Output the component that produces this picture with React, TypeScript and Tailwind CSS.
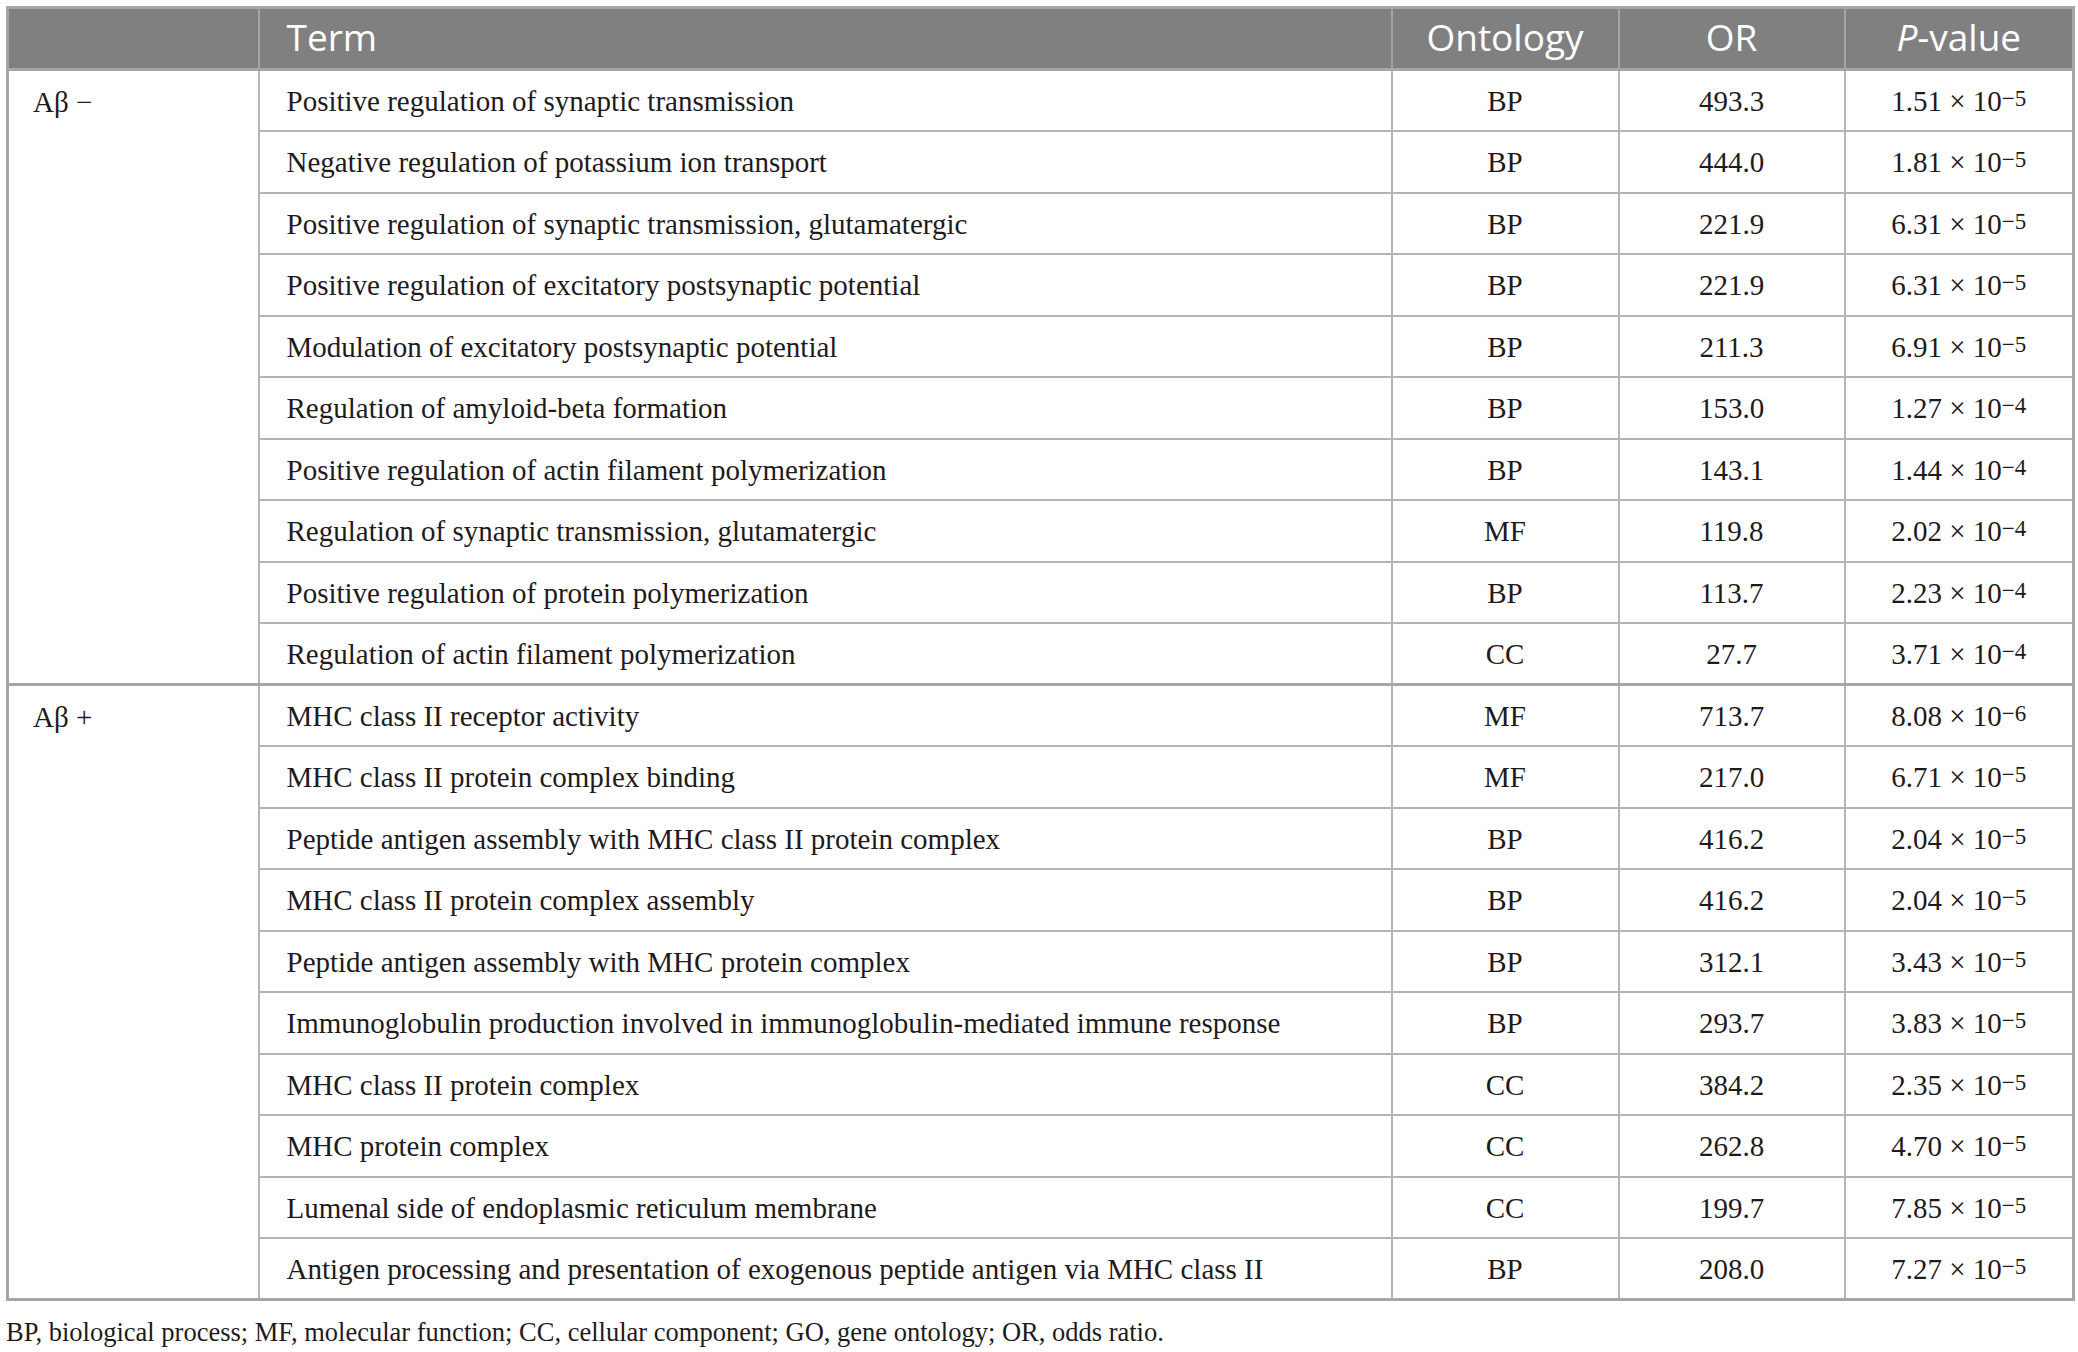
import React from "react";

type Row = { term: string; ont: string; or: string; p: string; exp: string };

const minus: Row[] = [
  { term: "Positive regulation of synaptic transmission", ont: "BP", or: "493.3", p: "1.51", exp: "5" },
  { term: "Negative regulation of potassium ion transport", ont: "BP", or: "444.0", p: "1.81", exp: "5" },
  { term: "Positive regulation of synaptic transmission, glutamatergic", ont: "BP", or: "221.9", p: "6.31", exp: "5" },
  { term: "Positive regulation of excitatory postsynaptic potential", ont: "BP", or: "221.9", p: "6.31", exp: "5" },
  { term: "Modulation of excitatory postsynaptic potential", ont: "BP", or: "211.3", p: "6.91", exp: "5" },
  { term: "Regulation of amyloid-beta formation", ont: "BP", or: "153.0", p: "1.27", exp: "4" },
  { term: "Positive regulation of actin filament polymerization", ont: "BP", or: "143.1", p: "1.44", exp: "4" },
  { term: "Regulation of synaptic transmission, glutamatergic", ont: "MF", or: "119.8", p: "2.02", exp: "4" },
  { term: "Positive regulation of protein polymerization", ont: "BP", or: "113.7", p: "2.23", exp: "4" },
  { term: "Regulation of actin filament polymerization", ont: "CC", or: "27.7", p: "3.71", exp: "4" },
];

const plus: Row[] = [
  { term: "MHC class II receptor activity", ont: "MF", or: "713.7", p: "8.08", exp: "6" },
  { term: "MHC class II protein complex binding", ont: "MF", or: "217.0", p: "6.71", exp: "5" },
  { term: "Peptide antigen assembly with MHC class II protein complex", ont: "BP", or: "416.2", p: "2.04", exp: "5" },
  { term: "MHC class II protein complex assembly", ont: "BP", or: "416.2", p: "2.04", exp: "5" },
  { term: "Peptide antigen assembly with MHC protein complex", ont: "BP", or: "312.1", p: "3.43", exp: "5" },
  { term: "Immunoglobulin production involved in immunoglobulin-mediated immune response", ont: "BP", or: "293.7", p: "3.83", exp: "5" },
  { term: "MHC class II protein complex", ont: "CC", or: "384.2", p: "2.35", exp: "5" },
  { term: "MHC protein complex", ont: "CC", or: "262.8", p: "4.70", exp: "5" },
  { term: "Lumenal side of endoplasmic reticulum membrane", ont: "CC", or: "199.7", p: "7.85", exp: "5" },
  { term: "Antigen processing and presentation of exogenous peptide antigen via MHC class II", ont: "BP", or: "208.0", p: "7.27", exp: "5" },
];

const td = "border-2 border-[#b4b4b4] align-middle leading-none pt-[2px]";

const Group = ({ label, rows }: { label: string; rows: Row[] }) => (
  <tbody className="border-t-[3px] border-[#a6a6a6]">
    {rows.map((r, i) => (
      <tr key={i} className="h-[61.5px]">
        {i === 0 && (
          <td rowSpan={rows.length} className={`${td} !align-top pl-[24px]`}>
            <div className="h-[58px] flex items-center">{label}</div>
          </td>
        )}
        <td className={`${td} pl-[27px]`}>{r.term}</td>
        <td className={`${td} text-center`}>{r.ont}</td>
        <td className={`${td} text-center`}>{r.or}</td>
        <td className={`${td} text-center`}>
          {r.p} × 10
          <sup className="text-[23px] relative -top-[5px]">−{r.exp}</sup>
        </td>
      </tr>
    ))}
  </tbody>
);

export default function App() {
  return (
    <div className="bg-white w-[2078px] h-[1352px] pt-[6px] pl-[6px] font-['Liberation_Serif',serif] text-[#1f1a1b]">
      <table className="border-collapse border-[3px] border-[#a6a6a6] w-[2066px] table-fixed text-[29px]">
        <colgroup>
          <col className="w-[251px]" />
          <col className="w-[1133px]" />
          <col className="w-[227px]" />
          <col className="w-[226px]" />
          <col className="w-[229px]" />
        </colgroup>
        <thead>
          <tr className="h-[62px] bg-[#808080] text-white font-['Open_Sans',sans-serif] text-[37px] leading-none">
            <th className="border-2 border-[#a6a6a6] font-normal pb-[5px]"></th>
            <th className="border-2 border-[#a6a6a6] font-normal pb-[5px] text-left pl-[27px]">Term</th>
            <th className="border-2 border-[#a6a6a6] font-normal pb-[5px]">Ontology</th>
            <th className="border-2 border-[#a6a6a6] font-normal pb-[5px]">OR</th>
            <th className="border-2 border-[#a6a6a6] font-normal pb-[5px]">
              <i>P</i>-value
            </th>
          </tr>
        </thead>
        <Group label="Aβ −" rows={minus} />
        <Group label="Aβ +" rows={plus} />
      </table>
      <p className="mt-[18px] text-[26.5px] leading-none">
        BP, biological process; MF, molecular function; CC, cellular component; GO, gene ontology; OR, odds ratio.
      </p>
    </div>
  );
}
